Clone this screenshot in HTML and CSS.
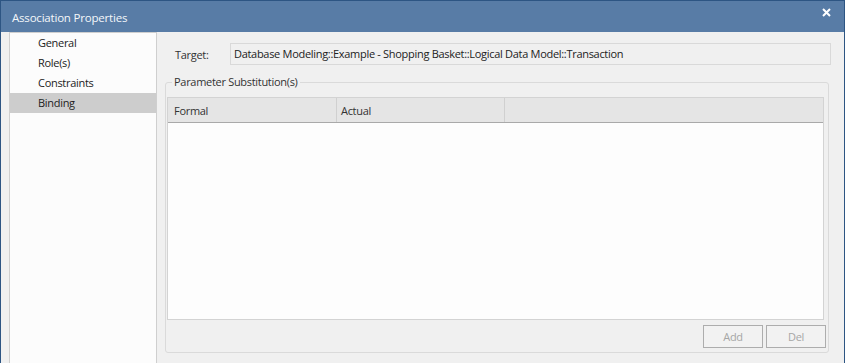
FILE: index.html
```html
<!DOCTYPE html>
<html>
<head>
<meta charset="utf-8">
<link rel="stylesheet" href="styles.css">
</head>
<body>
<div class="window">
  <div class="titlebar">
    <span class="title">Association Properties</span>
    <svg class="close" width="9" height="9" viewBox="0 0 9 9"><path d="M1 1 L8 8 M8 1 L1 8" stroke="#ffffff" stroke-width="2" fill="none"/></svg>
  </div>
  <div class="body">
    <div class="sidebar">
      <div class="item">General</div>
      <div class="item">Role(s)</div>
      <div class="item">Constraints</div>
      <div class="item selected">Binding</div>
    </div>
    <div class="main">
      <div class="target-row">
        <span class="label">Target:</span>
        <div class="field">Database Modeling::Example - Shopping Basket::Logical Data Model::Transaction</div>
      </div>
      <fieldset class="group">
        <legend>Parameter Substitution(s)</legend>
        <div class="grid">
          <div class="grid-head">
            <div class="col col-formal">Formal</div>
            <div class="col col-actual">Actual</div>
            <div class="col col-rest"></div>
          </div>
          <div class="grid-body"></div>
        </div>
        <div class="buttons">
          <button class="btn">Add</button>
          <button class="btn">Del</button>
        </div>
      </fieldset>
    </div>
  </div>
</div>
</body>
</html>
```
FILE: styles.css
```css
html, body {
  margin: 0;
  padding: 0;
  background: #f0f0f0;
}
body {
  font-family: "Open Sans", "Noto Sans", sans-serif;
  font-size: 11px;
  letter-spacing: -0.3px;
  color: #1e1e1e;
}
.window {
  width: 845px;
  height: 363px;
  box-sizing: border-box;
  border: 1px solid #2d5583;
  border-bottom: none;
  display: flex;
  flex-direction: column;
  overflow: hidden;
  background: #f0f0f0;
}
.titlebar {
  height: 31px;
  flex: none;
  background: #587ca6;
  display: flex;
  align-items: center;
  justify-content: space-between;
  padding: 0 13px 4px 11px;
  box-sizing: border-box;
}
.title {
  color: #f4f7fa;
  font-size: 11.5px;
  letter-spacing: -0.2px;
  padding-top: 6px;
}
.close {
  display: block;
  margin-top: -5px;
}
.body {
  flex: 1;
  display: flex;
}
.sidebar {
  width: 148px;
  box-sizing: border-box;
  margin-left: 8px;
  background: #fcfcfc;
  border: 1px solid #cfcfcf;
  border-bottom: none;
  flex: none;
}
.item {
  height: 20px;
  line-height: 20px;
  padding-left: 28px;
  color: #222;
}
.item.selected {
  background: #cdcdcd;
}
.main {
  flex: 1;
  padding: 11px 13px 0 0;
  display: flex;
  flex-direction: column;
}
.target-row {
  display: flex;
  align-items: center;
  height: 22px;
}
.label {
  width: 55px;
  padding-left: 18px;
  flex: none;
  color: #333;
}
.field {
  flex: 1;
  height: 22px;
  box-sizing: border-box;
  border: 1px solid #d9d9d9;
  line-height: 20px;
  padding-left: 3px;
  color: #222;
}
.group {
  margin: 9px 2px 0 8px;
  padding: 7px 2px 4px 1px;
  border: 1px solid #dadada;
  border-radius: 3px;
  min-width: 0;
}
.group legend {
  margin-left: 5px;
  padding: 0 2px;
  line-height: 16px;
  height: 16px;
  color: #333;
}
.grid {
  height: 223px;
  box-sizing: border-box;
  margin-right: 2px;
  border: 1px solid #d3d3d3;
  display: flex;
  flex-direction: column;
  background: #fdfdfd;
}
.grid-head {
  height: 24px;
  flex: none;
  background: #e5e5e5;
  border-bottom: 1px solid #a9a9a9;
  display: flex;
}
.col {
  line-height: 25px;
  padding-left: 6px;
  box-sizing: border-box;
  border-right: 1px solid #d0d0d0;
  color: #333;
}
.col-formal { width: 169px; }
.col-actual { width: 168px; padding-left: 4px; }
.col-rest { flex: 1; border-right: none; }
.grid-body {
  flex: 1;
}
.buttons {
  display: flex;
  justify-content: flex-end;
  gap: 3px;
  margin-top: 5px;
}
.btn {
  width: 60px;
  height: 23px;
  box-sizing: border-box;
  border: 1px solid #adadad;
  background: #f2f2f2;
  color: #a6a6a6;
  font-family: inherit;
  font-size: 11px;
  letter-spacing: -0.3px;
  padding: 0;
  border-radius: 0;
}
```
